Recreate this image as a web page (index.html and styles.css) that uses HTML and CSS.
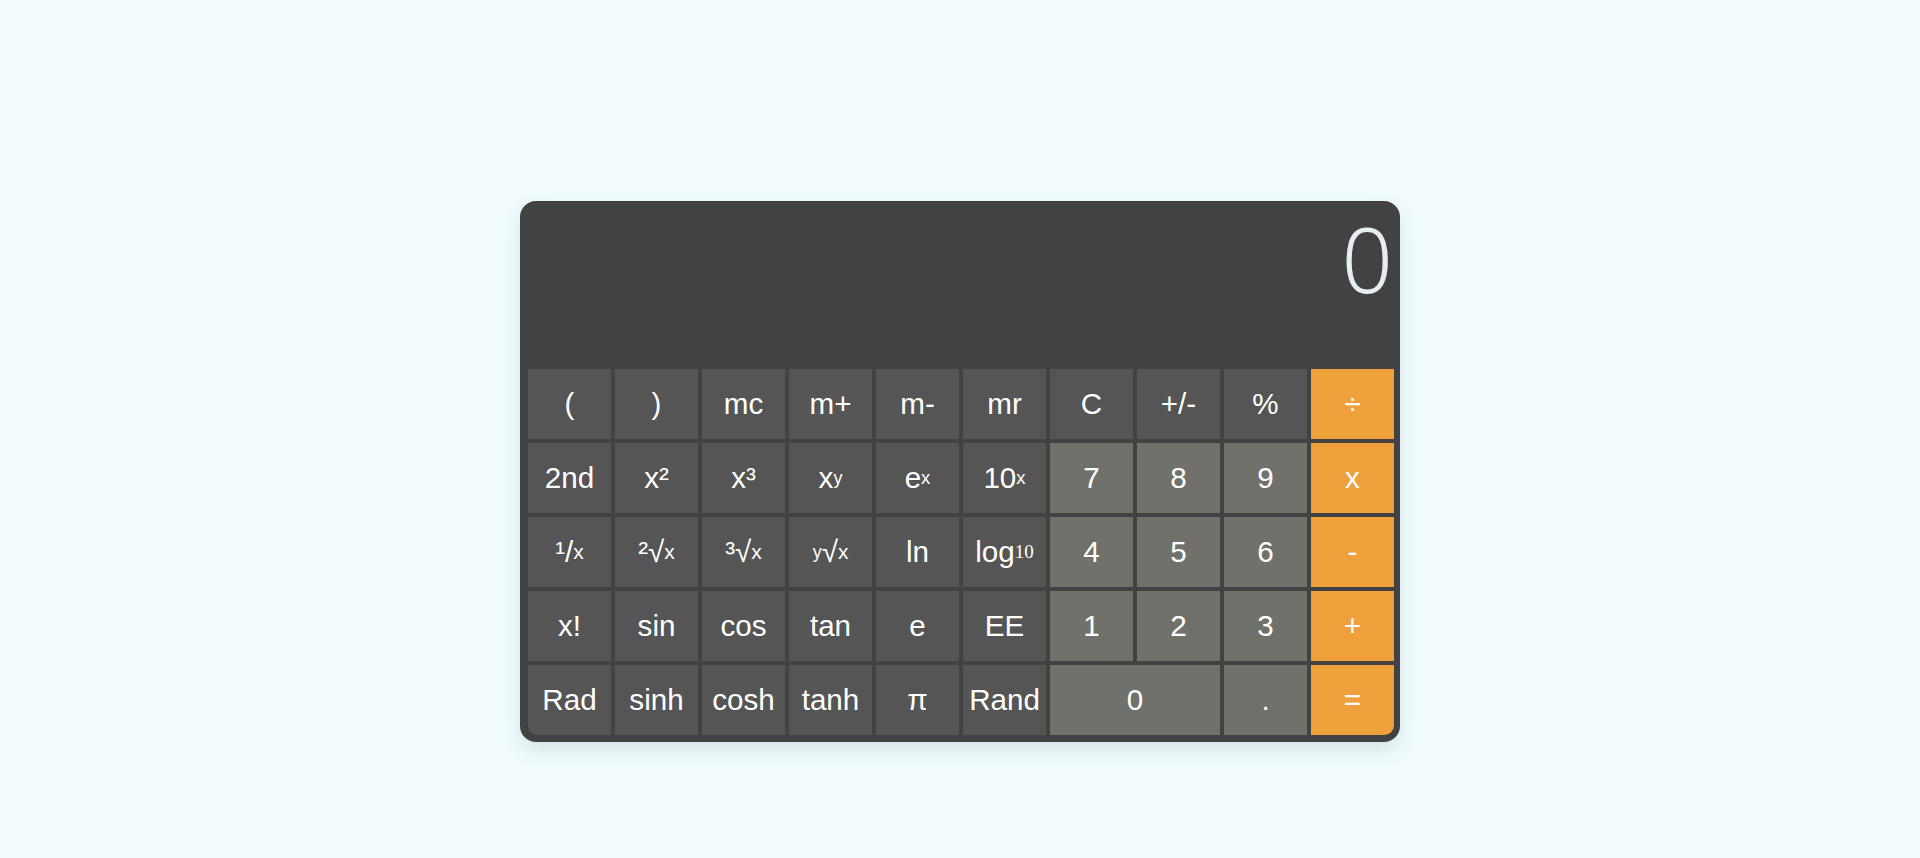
FILE: index.html
```html
<!DOCTYPE html>
<html lang="en">
<head>
<meta charset="utf-8">
<title>Calculator</title>
<link rel="stylesheet" href="styles.css">
</head>
<body>
<main class="page">
  <div class="calculator">
    <div class="display">0</div>
    <div class="keys">
      <button class="key fn">(</button>
      <button class="key fn">)</button>
      <button class="key fn">mc</button>
      <button class="key fn">m+</button>
      <button class="key fn">m-</button>
      <button class="key fn">mr</button>
      <button class="key fn">C</button>
      <button class="key fn">+/-</button>
      <button class="key fn">%</button>
      <button class="key op">÷</button>

      <button class="key fn">2nd</button>
      <button class="key fn">x²</button>
      <button class="key fn">x³</button>
      <button class="key fn">x<span class="sup sup-y">y</span></button>
      <button class="key fn">e<span class="sup">x</span></button>
      <button class="key fn">10<span class="sup">x</span></button>
      <button class="key num">7</button>
      <button class="key num">8</button>
      <button class="key num">9</button>
      <button class="key op">x</button>

      <button class="key fn">¹/<span class="sub">x</span></button>
      <button class="key fn">²√<span class="sub">x</span></button>
      <button class="key fn">³√<span class="sub">x</span></button>
      <button class="key fn"><span class="sup sup-y">y</span>√<span class="sub">x</span></button>
      <button class="key fn">ln</button>
      <button class="key fn">log<span class="sub-serif">10</span></button>
      <button class="key num">4</button>
      <button class="key num">5</button>
      <button class="key num">6</button>
      <button class="key op">-</button>

      <button class="key fn">x!</button>
      <button class="key fn">sin</button>
      <button class="key fn">cos</button>
      <button class="key fn">tan</button>
      <button class="key fn">e</button>
      <button class="key fn">EE</button>
      <button class="key num">1</button>
      <button class="key num">2</button>
      <button class="key num">3</button>
      <button class="key op">+</button>

      <button class="key fn">Rad</button>
      <button class="key fn">sinh</button>
      <button class="key fn">cosh</button>
      <button class="key fn">tanh</button>
      <button class="key fn">π</button>
      <button class="key fn">Rand</button>
      <button class="key num zero">0</button>
      <button class="key num">.</button>
      <button class="key op">=</button>
    </div>
  </div>
</main>
</body>
</html>
```
FILE: styles.css
```css
* {
  box-sizing: border-box;
}

html, body {
  margin: 0;
  padding: 0;
  background: #f2fcfe;
  height: 100%;
}

.page {
  display: flex;
  justify-content: center;
  padding-top: 201px;
}

.calculator {
  width: 880px;
  background: #424242;
  border: 7px solid #424242;
  border-left-width: 8px;
  border-right-width: 6px;
  border-radius: 16px;
  overflow: hidden;
  box-shadow: 0 8px 20px rgba(40, 70, 80, 0.14);
}

.display {
  height: 161px;
  padding-top: 1px;
  padding-right: 1px;
  text-align: right;
  font-family: "Noto Sans", "Open Sans", sans-serif;
  font-weight: 300;
  font-size: 90px;
  line-height: 1.1;
  color: #e7eef1;
}

.keys {
  display: grid;
  grid-template-columns: repeat(10, 1fr);
  grid-auto-rows: 70px;
  gap: 4px;
}

.key {
  display: flex;
  align-items: center;
  justify-content: center;
  border: 0;
  padding: 0;
  margin: 0;
  color: #ffffff;
  font-family: "Liberation Sans", Arial, sans-serif;
  font-size: 29.6px;
  white-space: nowrap;
}

.fn {
  background: #555555;
}

.num {
  background: #71716b;
}

.op {
  background: #f0a03b;
}

.zero {
  grid-column: span 2;
}

.sup {
  font-size: 18.5px;
  vertical-align: 8px;
}

.sup-y {
  font-size: 18px;
  vertical-align: 10px;
}

.sub {
  font-size: 21px;
  vertical-align: -2px;
}

.sub-serif {
  font-family: "Liberation Serif", "Times New Roman", serif;
  font-size: 19px;
  vertical-align: -3px;
}
```
